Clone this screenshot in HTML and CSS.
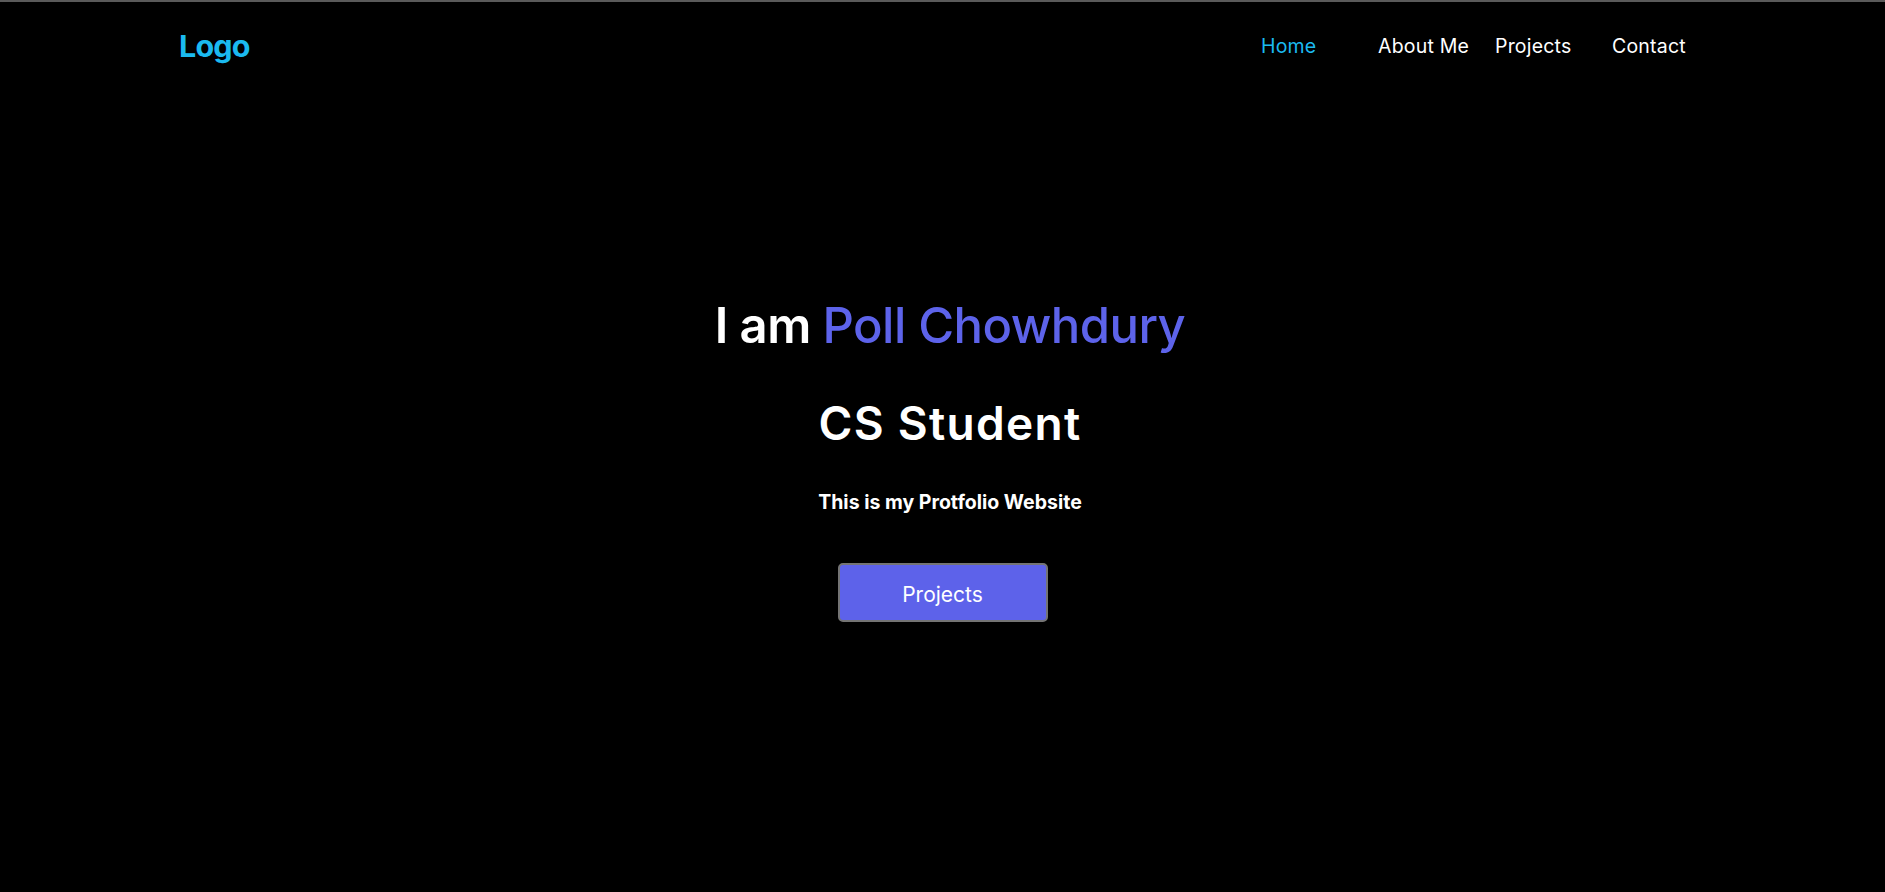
FILE: index.html
```html
<!DOCTYPE html>
<html lang="en">
<head>
<meta charset="utf-8">
<title>Portfolio</title>
<link rel="stylesheet" href="styles.css">
</head>
<body>
<header class="topbar">
  <div class="logo">Logo</div>
  <nav class="nav">
    <a class="nav-link active" href="#">Home</a>
    <a class="nav-link" href="#">About Me</a>
    <a class="nav-link" href="#">Projects</a>
    <a class="nav-link" href="#">Contact</a>
  </nav>
</header>
<main class="hero">
  <div class="hero-text">
    <h1 class="title">I am <span class="accent">Poll Chowhdury</span></h1>
    <h2 class="role">CS Student</h2>
    <p class="tagline">This is my Protfolio Website</p>
  </div>
  <button class="cta">Projects</button>
</main>
</body>
</html>
```
FILE: styles.css
```css
* { box-sizing: border-box; }
html, body { margin: 0; padding: 0; }
body {
  background: #000;
  color: #fff;
  font-family: "Inter", "Noto Sans", sans-serif;
  border-top: 2px solid #5a5a5a;
  height: 892px;
  overflow: hidden;
}
.topbar {
  display: flex;
  align-items: flex-start;
  padding: 0 0 0 179px;
  height: 90px;
}
.logo {
  color: #1bbaf0;
  font-weight: 700;
  font-size: 30.5px;
  letter-spacing: -0.8px;
  line-height: 1;
  margin-top: 29px;
  width: 1082px;
}
.nav {
  display: flex;
  margin-top: 35px;
}
.nav-link {
  width: 117px;
  color: #fff;
  text-decoration: none;
  font-size: 19.5px;
  letter-spacing: 0.2px;
  line-height: 1;
}
.nav-link.active { color: #1bbaf0; }
.hero {
  display: flex;
  flex-direction: column;
  align-items: center;
}
.hero-text {
  padding-left: 15px;
  text-align: center;
}
.title {
  margin: 209px 0 0;
  font-size: 49px;
  font-weight: 600;
  line-height: 1;
  letter-spacing: -0.55px;
}
.accent { color: #5d63ea; font-weight: 500; }
.role {
  margin: 50px 0 0;
  font-size: 46px;
  font-weight: 600;
  line-height: 1;
  letter-spacing: 1.3px;
}
.tagline {
  margin: 47px 0 0;
  font-size: 19.5px;
  font-weight: 700;
  line-height: 1;
}
.cta {
  margin-top: 50px;
  width: 210px;
  height: 59px;
  background: #5d62ea;
  border: 2px solid #747474;
  border-radius: 5px;
  color: #fff;
  font-family: inherit;
  font-size: 21px;
  padding-top: 5px;
}
```
